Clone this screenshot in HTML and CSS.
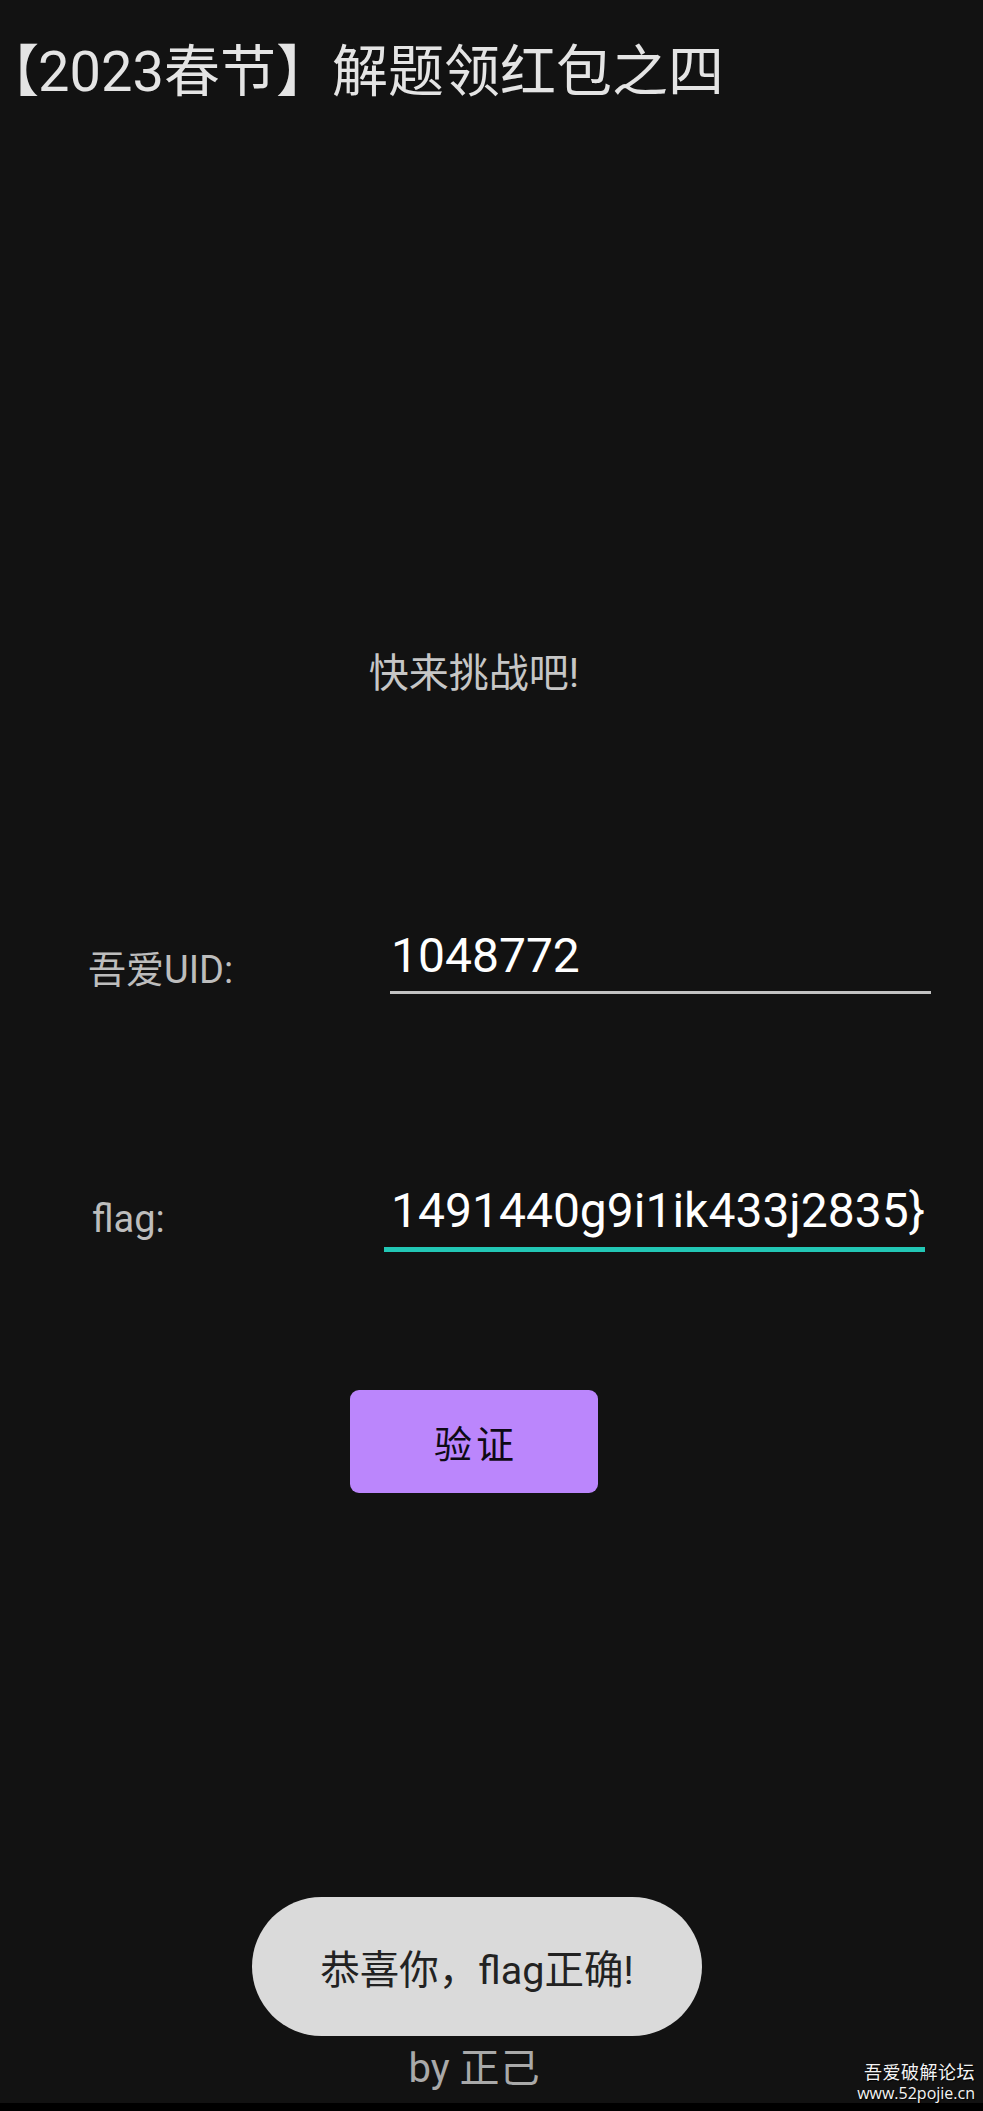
FILE: index.html
```html
<!DOCTYPE html>
<html lang="zh-CN">
<head>
    <meta charset="UTF-8">
    <meta name="viewport" content="width=device-width, initial-scale=1.0">
    <title>【2023春节】解题领红包之四</title>
    <link rel="stylesheet" href="styles.css">
</head>
<body>

    <!-- Title bar -->
    <div class="title"><span class="bracket">【</span>2023春节】解题领红包之四</div>

    <!-- Challenge form -->
    <div class="main">
        <div class="subtitle">快来挑战吧!</div>

        <div class="row row-uid">
            <label class="label" for="uid">吾爱UID:</label>
            <div class="field">
                <div class="field-text" id="uid">1048772</div>
            </div>
        </div>

        <div class="row row-flag">
            <label class="label" for="flag">flag:</label>
            <div class="field focused">
                <div class="field-text" id="flag">1491440g9i1ik433j2835}</div>
            </div>
        </div>

        <div class="actions">
            <button type="button" class="verify">验证</button>
        </div>
    </div>

    <div class="author">by 正己</div>
    <div class="navbar"></div>

    <!-- Toast message -->
    <div class="toast">恭喜你，flag正确!</div>

    <!-- Watermark -->
    <div class="watermark">
        <span class="wm-name">吾爱破解论坛</span>
        <span class="wm-url">www.52pojie.cn</span>
    </div>

</body>
</html>
```

FILE: styles.css
```css
body {
    margin: 0;
    padding: 0;
    width: 983px;
    height: 2111px;
    background-color: #121212;
    font-family: Roboto, "Noto Sans CJK SC", sans-serif;
    display: flex;
    flex-direction: column;
    position: relative;
    overflow: hidden;
}

.title {
    margin-top: 40px;
    padding-left: 10px;
    font-size: 56px;
    line-height: 64px;
    color: #e4e4e4;
    white-space: nowrap;
}

/* trim the empty half of the opening bracket */
.title .bracket {
    font-feature-settings: "palt";
}

.main {
    flex: 1;
    padding-right: 35px;
    display: flex;
    flex-direction: column;
}

.subtitle {
    margin-top: 546px;
    text-align: center;
    font-size: 40px;
    line-height: 48px;
    color: #c6c6c6;
}

.row {
    display: flex;
    align-items: flex-end;
}

.row-uid {
    margin-top: 230px;
    padding-left: 88px;
    padding-right: 17px;
}

.row-uid .label {
    width: 302px;
}

.row-flag {
    margin-top: 189px;
    padding-left: 92px;
    padding-right: 23px;
}

.row-flag .label {
    width: 292px;
    margin-bottom: 9px;
}

.label {
    flex-shrink: 0;
    font-size: 38px;
    line-height: 48px;
    color: #bdbdbd;
}

.field {
    flex: 1;
    min-width: 0;
    display: flex;
    justify-content: flex-end;
    overflow: hidden;
    padding-bottom: 7px;
    border-bottom: 3px solid #c2c2c2;
}

.row-uid .field {
    justify-content: flex-start;
}

.field.focused {
    padding-bottom: 8px;
    border-bottom: 5px solid #22c7b5;
}

.field-text {
    white-space: nowrap;
    font-size: 48px;
    line-height: 56px;
    color: #ffffff;
    padding-left: 1px;
}

.actions {
    margin-top: 138px;
    display: flex;
    justify-content: center;
}

.verify {
    width: 248px;
    height: 103px;
    border: none;
    border-radius: 9px;
    background-color: #bb86fc;
    color: #0e0a14;
    font-family: Roboto, "Noto Sans CJK SC", sans-serif;
    font-size: 38px;
    letter-spacing: 4px;
    padding: 0 0 0 4px;
    cursor: pointer;
}

.author {
    padding-right: 35px;
    margin-bottom: 10px;
    text-align: center;
    font-size: 40px;
    line-height: 48px;
    color: #a9a9a9;
}

.navbar {
    height: 8px;
    background-color: #000;
}

.toast {
    position: absolute;
    left: 252px;
    top: 1897px;
    width: 450px;
    height: 139px;
    border-radius: 70px;
    background-color: #dadada;
    color: #222222;
    font-size: 39.5px;
    display: flex;
    align-items: center;
    justify-content: center;
}

.watermark {
    position: absolute;
    right: 8px;
    bottom: 8px;
    display: flex;
    flex-direction: column;
    align-items: flex-end;
    color: #f4f4f4;
    text-shadow: 1px 1px 1px #000;
}

.wm-name {
    font-size: 18px;
    line-height: 20px;
    letter-spacing: 0.5px;
}

.wm-url {
    font-family: "Open Sans", sans-serif;
    font-size: 16px;
    line-height: 20px;
}
```
